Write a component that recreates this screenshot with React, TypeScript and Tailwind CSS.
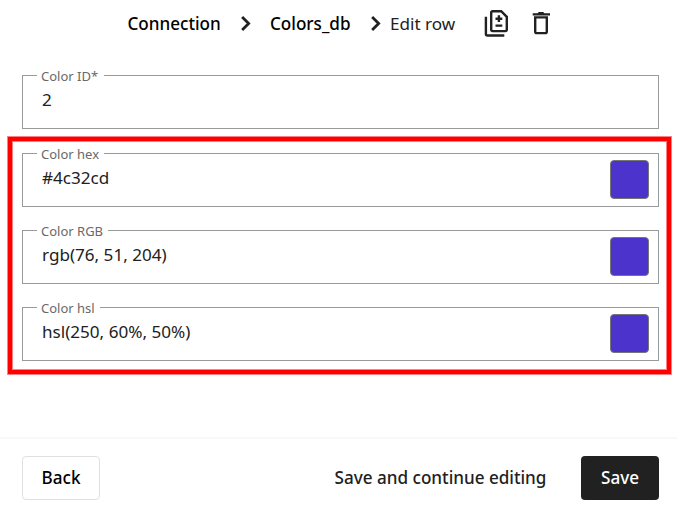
type FieldProps = {
  label: string;
  value: string;
  labelWidth: string;
  color?: string;
};

function Chevron({ className }: { className: string }) {
  return (
    <svg viewBox="0 0 24 24" fill="none" stroke="currentColor" strokeWidth="2.3" className={className}>
      <path d="M9.2 6.6 14.6 12l-5.4 5.4" />
    </svg>
  );
}

function DifferenceIcon({ className }: { className: string }) {
  return (
    <svg viewBox="0 0 29 29" fill="none" stroke="currentColor" strokeWidth="2.4" className={className}>
      <path d="M10.7 2.2h8.5l5.6 5.6v12.8q0 1.5-1.5 1.5H10.7q-1.5 0-1.5-1.5V3.7q0-1.5 1.5-1.5Z" />
      <path d="M3.9 7.7V25q0 1.5 1.5 1.5h16.9M16.9 6.3v6.8M13.5 9.7h6.8M13.5 16.6h6.8" />
    </svg>
  );
}

function TrashIcon({ className }: { className: string }) {
  return (
    <svg viewBox="0 0 29 29" fill="none" stroke="currentColor" strokeWidth="2.4" className={className}>
      <path d="M8.2 8.4h11.6v14q0 1.7-1.7 1.7H9.9q-1.7 0-1.7-1.7Z" />
      <path d="M11.8 3h4.4l1.2 1.2H23v2.3H5.7V4.2h4.9Z" fill="currentColor" stroke="none" />
    </svg>
  );
}

function Field({ label, value, labelWidth, color }: FieldProps) {
  return (
    <div className="relative flex h-[54px] items-start justify-between border border-[#9a9a9a] pl-[19px] pr-[9px]">
      <label className={`absolute -top-[9px] left-[14px] h-[18px] bg-white pl-1 text-[13px] leading-[18px] whitespace-nowrap text-[#696969] ${labelWidth}`}>
        {label}
      </label>
      <span className="pt-3 text-[17.1px] leading-6 text-[#212121]">{value}</span>
      {color && (
        <span className="mt-1.5 size-[39px] rounded-[4px] border border-[#767676]" style={{ backgroundColor: color }} />
      )}
    </div>
  );
}

function App() {
  return (
    <div className="flex h-[513px] w-[677px] flex-col overflow-hidden bg-white font-['Noto_Sans',sans-serif] text-[#212121]">
      {/* Breadcrumbs */}
      <header className="flex h-[47px] shrink-0 items-center pl-[127px] text-[17.1px] whitespace-nowrap">
        <a className="w-[94px] pl-[0.5px] font-medium text-black">Connection</a>
        <Chevron className="ml-[10px] size-[29px]" />
        <a className="ml-[10px] w-[81px] font-medium text-black">Colors_db</a>
        <Chevron className="ml-[10px] size-[29px]" />
        <span className="w-[66px]">Edit row</span>
        <DifferenceIcon className="ml-[26px] size-[29px]" />
        <TrashIcon className="ml-[16px] size-[29px]" />
      </header>

      <main className="flex flex-1 flex-col px-[7px] pt-7">
        <div className="pr-[11px] pl-[15px]">
          <Field label="Color ID*" value="2" labelWidth="w-[67px]" />
        </div>

        {/* Highlighted color fields */}
        <div className="mt-[7px] h-[239px] w-[665px] border border-[#ff8080] bg-[#ff8080]">
          <div className="h-full border-4 border-[#ff0000]">
            <div className="flex h-full flex-col gap-[23px] border border-[#ff8080] bg-white pt-[11px] pr-[7px] pl-[9px]">
              <Field label="Color hex" value="#4c32cd" labelWidth="w-[67px]" color="#4c33cc" />
              <Field label="Color RGB" value="rgb(76, 51, 204)" labelWidth="w-[71px]" color="#4c33cc" />
              <Field label="Color hsl" value="hsl(250, 60%, 50%)" labelWidth="w-[63px]" color="#4c33cc" />
            </div>
          </div>
        </div>
      </main>

      {/* Actions */}
      <footer className="flex h-[75px] shrink-0 items-start border-t border-[#f7f7f7] pt-[17px] pr-[18px] pl-[22px] text-[17.1px] font-medium whitespace-nowrap shadow-[0_-1px_2px_rgba(0,0,0,0.03)]">
        <button className="h-11 w-[78px] rounded-[4px] border border-[#e0e0e0] pb-px text-black">Back</button>
        <button className="ml-auto h-11 w-[213px] pb-px">Save and continue editing</button>
        <button className="ml-[34px] h-11 w-[78px] rounded-[4px] bg-[#212121] pb-px text-white">Save</button>
      </footer>
    </div>
  );
}

export default App;
